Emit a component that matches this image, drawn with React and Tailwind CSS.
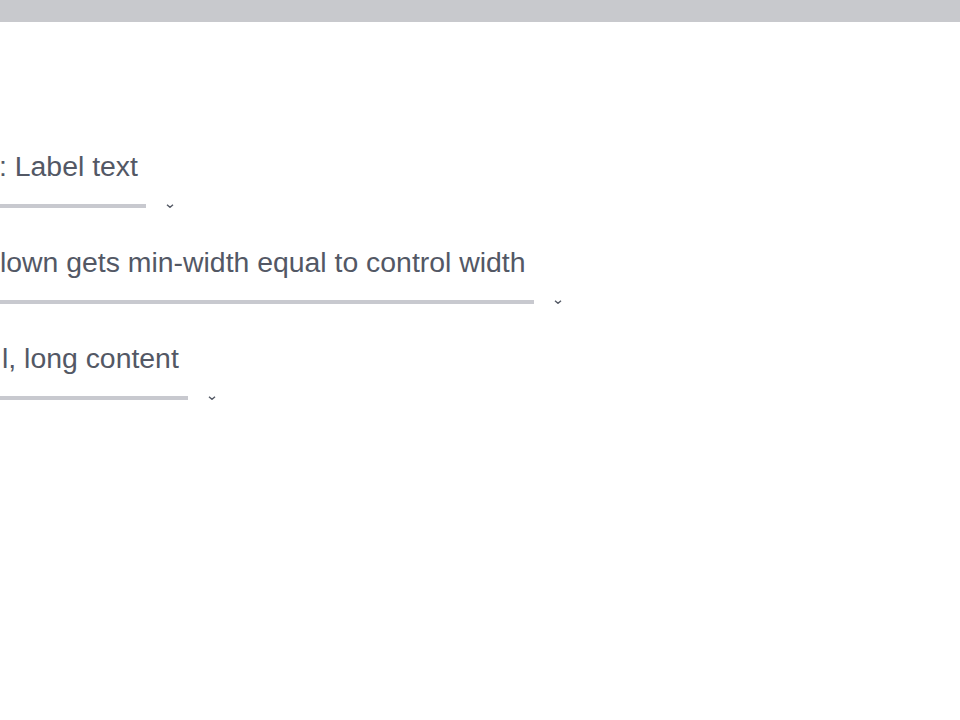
import React from 'react';

const rows = [
  { label: ': Label text', bar: 'w-[146px]', shift: 'ml-[-1px]' },
  { label: 'lown gets min-width equal to control width', bar: 'w-[534px]', shift: 'ml-0' },
  { label: 'l, long content', bar: 'w-[188px]', shift: 'ml-[2px]' },
];

function Chevron() {
  return (
    <svg width="8" height="4" viewBox="0 0 8 4" className="shrink-0 text-[#555a66]">
      <polyline points="1,0.7 4,3.3 7,0.7" fill="none" stroke="currentColor" strokeWidth="1.4" />
    </svg>
  );
}

function Row({ label, bar, shift }) {
  return (
    <div className="flex flex-col">
      <div className={`text-[28.4px] leading-[32px] text-[#535865] whitespace-nowrap ${shift}`}>{label}</div>
      <div className="mt-[22px] flex items-center gap-[20px]">
        <div className={`h-[4px] bg-[#c8c9cf] ${bar}`} />
        <Chevron />
      </div>
    </div>
  );
}

export default function App() {
  return (
    <div className="w-[960px] h-[720px] bg-white overflow-hidden font-['Liberation_Sans',Arial,sans-serif]">
      <div className="h-[22px] bg-[#c8c9cd]" />
      <div className="pt-[128px] flex flex-col gap-[38px]">
        {rows.map((r) => (
          <Row key={r.label} {...r} />
        ))}
      </div>
    </div>
  );
}
